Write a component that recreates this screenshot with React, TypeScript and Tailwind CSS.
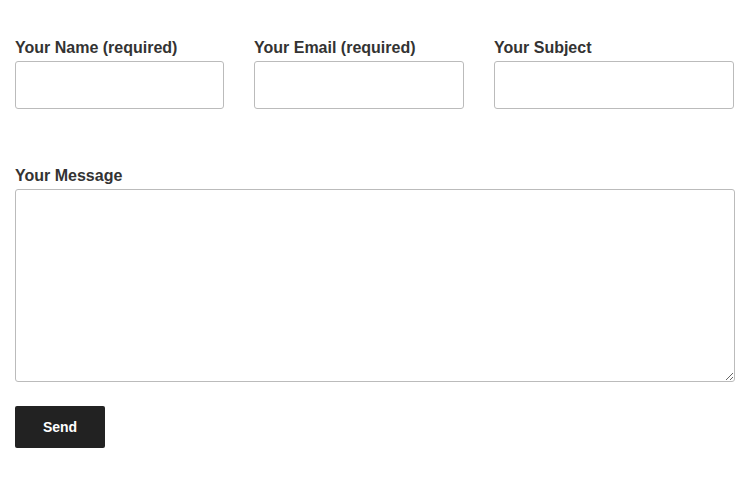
import React from 'react';

const labelCls = 'block text-[16px] leading-[20px] font-bold text-[#333333] mb-[3px]';
const fieldCls = 'block h-[48px] bg-white border border-[#bbbbbb] rounded-[3px] px-3 text-[16px] text-[#333333] outline-none';

export default function App() {
  return (
    <div className="min-h-[497px] w-full bg-white font-['Liberation_Sans',Arial,sans-serif]">
      <form className="pt-[38px] pl-[15px] w-[735px]" onSubmit={(e) => e.preventDefault()}>
        {/* Top row */}
        <div className="flex gap-[30px]">
          <div className="w-[209px]">
            <label className={labelCls}>Your Name (required)</label>
            <input type="text" className={`${fieldCls} w-full`} />
          </div>
          <div className="w-[210px]">
            <label className={labelCls}>Your Email (required)</label>
            <input type="email" className={`${fieldCls} w-full`} />
          </div>
          <div className="w-[240px]">
            <label className={labelCls}>Your Subject</label>
            <input type="text" className={`${fieldCls} w-full`} />
          </div>
        </div>

        {/* Message */}
        <div className="mt-[57px] w-[720px]">
          <label className={labelCls}>Your Message</label>
          <textarea className="block w-full h-[193px] bg-white border border-[#bbbbbb] rounded-[3px] p-3 text-[16px] text-[#333333] outline-none" />
        </div>

        <button
          type="submit"
          className="mt-[24px] w-[90px] h-[42px] bg-[#222222] rounded-[2px] text-white text-[14px] font-bold"
        >
          Send
        </button>
      </form>
    </div>
  );
}
